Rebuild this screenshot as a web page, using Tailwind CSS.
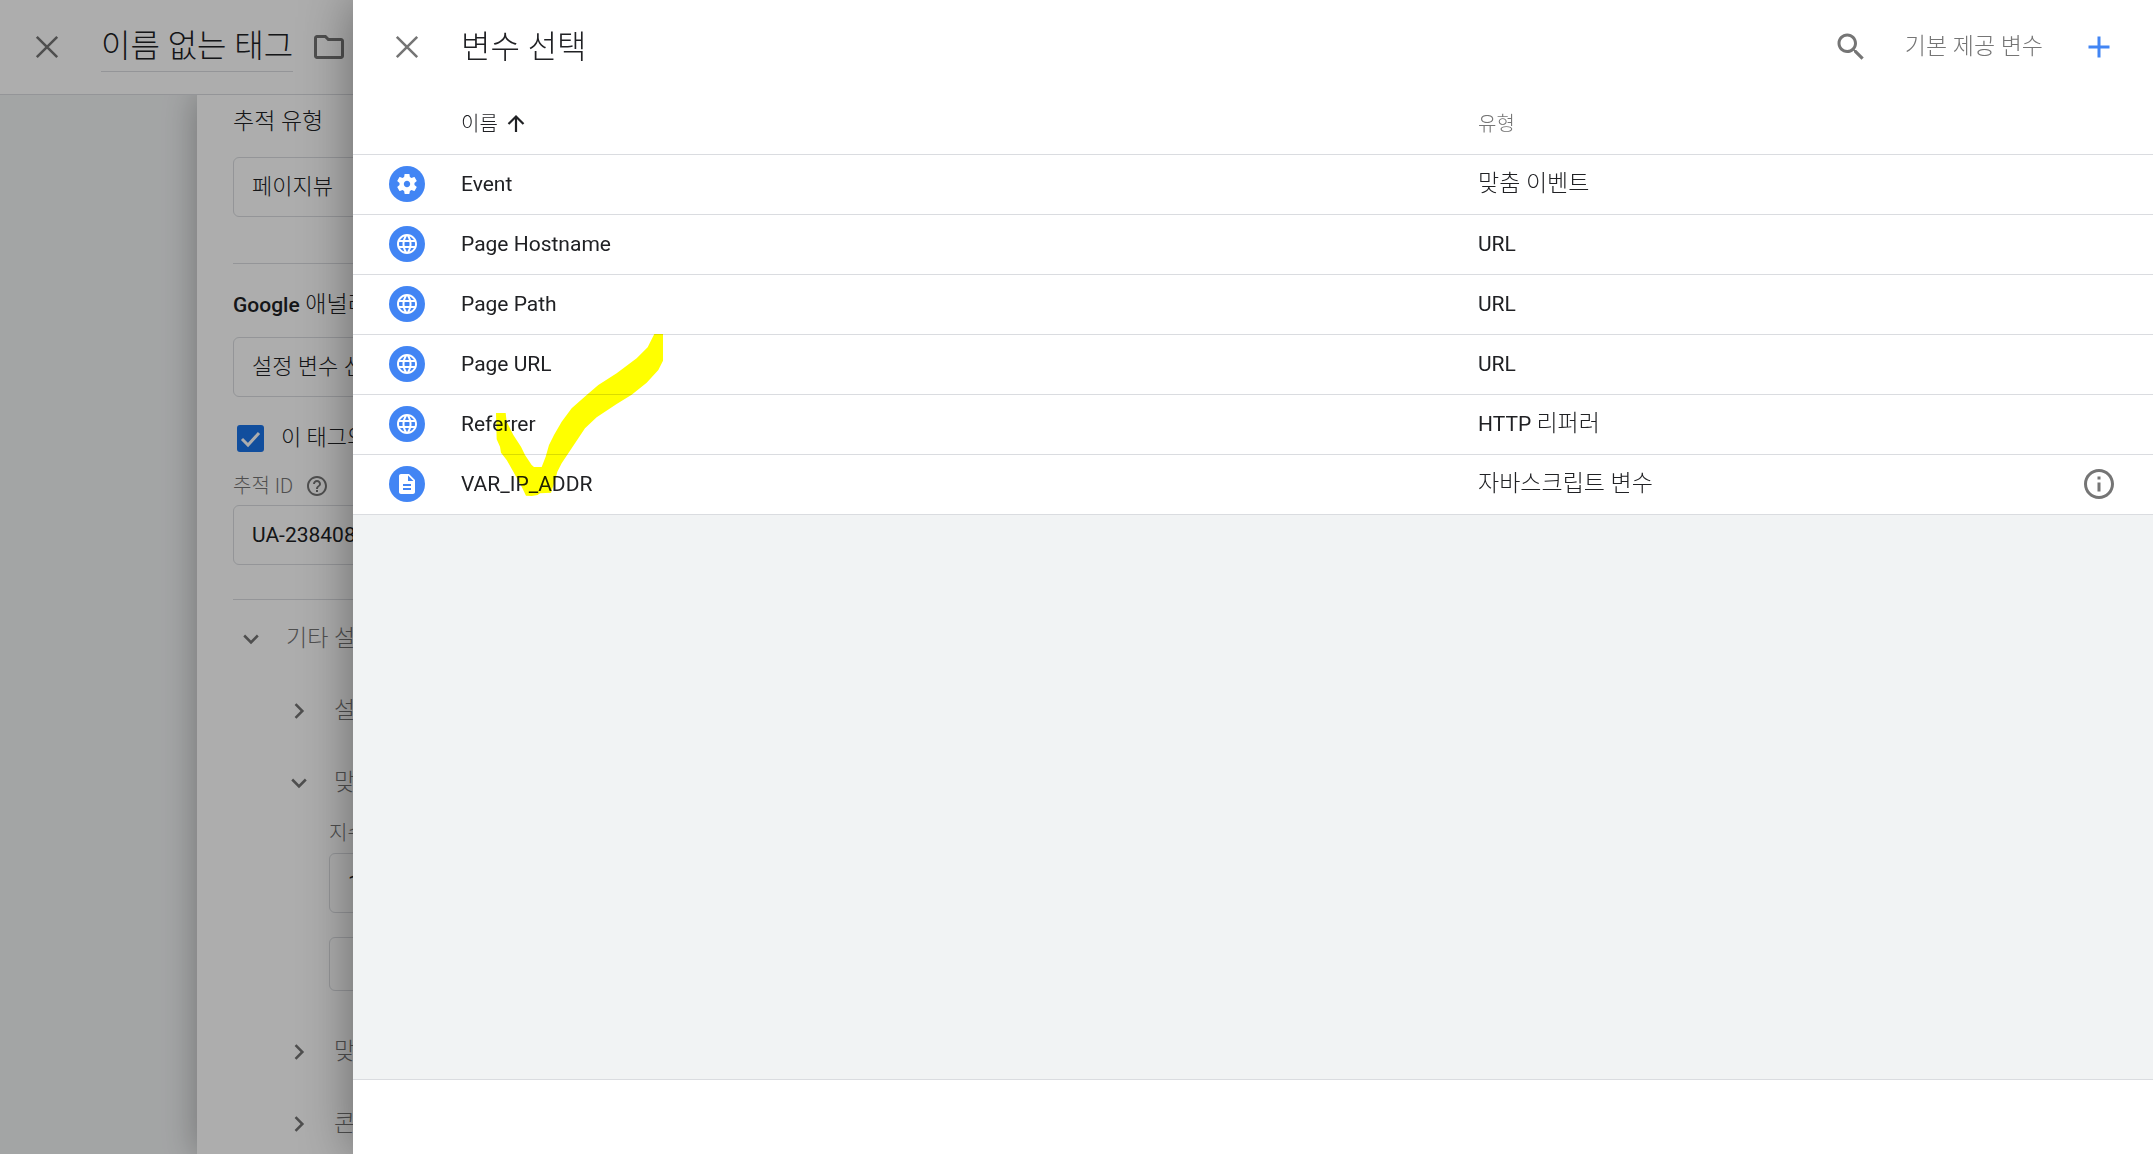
<!DOCTYPE html>
<html lang="ko">
  <head>
    <meta charset="UTF-8" />
    <meta name="viewport" content="width=device-width, initial-scale=1.0" />
    <script src="https://cdn.jsdelivr.net/npm/@tailwindcss/browser@4"></script>
    <title>변수 선택</title>
  </head>
  <body
    class="relative h-screen overflow-hidden bg-white font-[Roboto,'Noto_Sans_CJK_KR',sans-serif] text-[21px] leading-[30px] text-[#202124]"
  >
    <!-- icons -->
    <svg class="hidden">
      <symbol id="icon-close" viewBox="0 0 24 24">
        <path d="M5.2 5.2l13.600 13.600M18.800 5.200l-13.600 13.600" fill="none" stroke="currentColor" stroke-width="1.700" />
      </symbol>
      <symbol id="icon-down" viewBox="-2 -2 28 28">
        <path d="M7.41 8.59L12 13.17l4.59-4.58L18 10l-6 6-6-6z" fill="currentColor" />
      </symbol>
      <symbol id="icon-right" viewBox="-2 -2 28 28">
        <path d="M8.59 16.59L13.17 12 8.59 7.41 10 6l6 6-6 6z" fill="currentColor" />
      </symbol>
      <symbol id="icon-globe" viewBox="0 0 24 24">
        <path
          fill="currentColor"
          d="M11.99 2C6.47 2 2 6.48 2 12s4.47 10 9.99 10C17.52 22 22 17.52 22 12S17.52 2 11.99 2zm6.93 6h-2.95c-.32-1.25-.78-2.45-1.38-3.56 1.84.63 3.37 1.91 4.33 3.56zM12 4.04c.83 1.2 1.48 2.53 1.91 3.96h-3.82c.43-1.43 1.08-2.76 1.91-3.96zM4.26 14C4.1 13.36 4 12.69 4 12s.1-1.36.26-2h3.38c-.08.66-.14 1.32-.14 2s.06 1.34.14 2H4.26zm.82 2h2.95c.32 1.25.78 2.45 1.38 3.56-1.84-.63-3.37-1.9-4.33-3.56zm2.95-8H5.08c.96-1.66 2.49-2.93 4.33-3.56C8.81 5.55 8.35 6.75 8.03 8zM12 19.96c-.83-1.2-1.48-2.53-1.91-3.96h3.82c-.43 1.43-1.08 2.76-1.91 3.96zM14.34 14H9.66c-.09-.66-.16-1.32-.16-2s.07-1.35.16-2h4.68c.09.65.16 1.32.16 2s-.07 1.34-.16 2zm.25 5.56c.6-1.11 1.06-2.31 1.38-3.56h2.95c-.96 1.65-2.49 2.93-4.33 3.56zM16.36 14c.08-.66.14-1.32.14-2s-.06-1.34-.14-2h3.38c.16.64.26 1.31.26 2s-.1 1.36-.26 2h-3.38z"
        />
      </symbol>
    </svg>

    <!-- tag editor -->
    <div class="flex h-full flex-col">
      <header
        class="relative z-10 flex h-[95px] shrink-0 items-center border-b border-[#dadce0] bg-white pl-[29px]"
      >
        <button type="button" aria-label="닫기" class="text-[#757575]">
          <svg class="size-9"><use href="#icon-close" /></svg>
        </button>
        <h1
          class="ml-9 border-b border-[#dadce0] pb-px text-[32px] leading-[48px] font-light whitespace-nowrap"
        >
          이름 없는 태그
        </h1>
        <button type="button" aria-label="폴더" class="ml-[18px] text-[#757575]">
          <svg class="size-9" viewBox="0 0 24 24">
            <path
              fill="currentColor"
              d="M9.17 6l2 2H20v10H4V6h5.17M10 4H4c-1.1 0-1.99.9-1.99 2L2 18c0 1.1.9 2 2 2h16c1.1 0 2-.9 2-2V8c0-1.1-.9-2-2-2h-8l-2-2z"
            />
          </svg>
        </button>
      </header>

      <div class="flex min-h-0 grow bg-[#f1f3f4] pl-[197px]">
        <form class="grow bg-white px-9 pt-3 shadow-[0_0_32px_rgba(0,0,0,0.3)]">
          <label for="track-type" class="block text-[23px] font-light">추적 유형</label>
          <select
            id="track-type"
            class="mt-5 block h-15 w-full appearance-none rounded-md border border-[#dadce0] px-[18px] text-[22px] font-light"
          >
            <option>페이지뷰</option>
          </select>

          <hr class="mt-[46px] border-[#dadce0]" />

          <label for="ga-setting" class="mt-[26px] block text-[23px] font-light"
            ><b class="text-[21px] font-medium">Google</b> 애널리틱스 설정</label
          >
          <select
            id="ga-setting"
            class="mt-[17px] block h-15 w-full appearance-none rounded-md border border-[#dadce0] px-[18px] text-[22px] font-light"
          >
            <option>설정 변수 선택...</option>
          </select>

          <div class="mt-[26px] flex items-center gap-[17px] pl-1">
            <span class="grid size-[27px]">
              <input
                id="override"
                type="checkbox"
                checked
                class="col-start-1 row-start-1 size-[27px] appearance-none rounded-[3px] bg-[#1a73e8]"
              />
              <svg class="pointer-events-none col-start-1 row-start-1 size-[27px]" viewBox="0 0 27 27">
                <path d="M5 14l6 6L22 8" fill="none" stroke="#fff" stroke-width="3" />
              </svg>
            </span>
            <label for="override" class="text-[22px] font-light">이 태그의 재정의 설정 사용</label>
          </div>

          <div class="mt-[18px] flex items-center gap-3 text-[#757575]">
            <label for="track-id" class="text-[20px] font-light">추적 ID</label>
            <svg class="size-6" viewBox="0 0 24 24">
              <path
                fill="currentColor"
                d="M11 18h2v-2h-2v2zm1-16C6.48 2 2 6.48 2 12s4.48 10 10 10 10-4.480 10-10S17.520 2 12 2zm0 18c-4.410 0-8-3.590-8-8s3.590-8 8-8 8 3.590 8 8-3.590 8-8 8zm0-14c-2.210 0-4 1.790-4 4h2c0-1.100.9-2 2-2s2 .9 2 2c0 2-3 1.750-3 5h2c0-2.250 3-2.500 3-5 0-2.210-1.790-4-4-4z"
              />
            </svg>
          </div>
          <input
            id="track-id"
            type="text"
            value="UA-238408"
            class="mt-1 block h-15 w-full rounded-md border border-[#dadce0] px-[18px]"
          />

          <hr class="mt-[34px] border-[#dadce0]" />

          <div class="text-[23px] text-[#757575]">
            <button type="button" class="mt-[21px] flex items-center gap-[17px] font-light">
              <svg class="size-9"><use href="#icon-down" /></svg>기타 설정
            </button>
            <div class="flex flex-col items-start pl-[48px]">
              <button type="button" class="mt-9 flex items-center gap-[17px] font-light">
                <svg class="size-9"><use href="#icon-right" /></svg>설정할 입력란
              </button>
              <button type="button" class="mt-9 flex items-center gap-[17px] font-light">
                <svg class="size-9"><use href="#icon-down" /></svg>맞춤 측정기준
              </button>
              <div class="mt-[17px] flex w-full flex-col pl-12">
                <label for="dim-index" class="text-[20px] font-light">지수</label>
                <input
                  id="dim-index"
                  type="text"
                  value="1"
                  class="mt-[5px] h-15 rounded-md border border-[#dadce0] px-[18px] text-[21px] text-[#202124]"
                />
                <button
                  type="button"
                  class="mt-6 h-[54px] rounded-md border border-[#dadce0]"
                  aria-label="맞춤 측정기준 추가"
                ></button>
              </div>
              <button type="button" class="mt-[43px] flex items-center gap-[17px] font-light">
                <svg class="size-9"><use href="#icon-right" /></svg>맞춤 측정항목
              </button>
              <button type="button" class="mt-9 flex items-center gap-[17px] font-light">
                <svg class="size-9"><use href="#icon-right" /></svg>콘텐츠 그룹
              </button>
            </div>
          </div>
        </form>
      </div>
    </div>

    <!-- scrim -->
    <div class="absolute inset-0 z-10 bg-black/32"></div>

    <!-- variable picker -->
    <section
      class="absolute inset-y-0 right-0 left-[353px] z-20 flex flex-col bg-[#f1f3f4] shadow-[0_0_48px_rgba(0,0,0,0.4)]"
    >
      <header class="flex h-[94px] shrink-0 items-center bg-white px-9">
        <button type="button" aria-label="닫기" class="text-[#757575]">
          <svg class="size-9"><use href="#icon-close" /></svg>
        </button>
        <h2 class="ml-9 text-[32px] leading-[46px] font-light">변수 선택</h2>
        <button type="button" aria-label="검색" class="ml-auto text-[#757575]">
          <svg class="size-9" viewBox="0 0 24 24">
            <path
              fill="currentColor"
              d="M15.5 14h-.79l-.28-.27C15.41 12.59 16 11.11 16 9.5 16 5.91 13.090 3 9.500 3S3 5.910 3 9.500 5.910 16 9.500 16c1.610 0 3.090-.59 4.230-1.570l.27.28v.79l5 4.990L20.490 19l-4.990-5zm-6 0C7.010 14 5 11.990 5 9.500S7.010 5 9.500 5 14 7.010 14 9.500 11.990 14 9.500 14z"
            />
          </svg>
        </button>
        <button type="button" class="ml-9 text-[23px] font-light text-[#757575]">기본 제공 변수</button>
        <button type="button" aria-label="새 변수" class="ml-[38px] text-[#4285f4]">
          <svg class="size-9" viewBox="0 0 24 24">
            <path d="M12 5v14M5 12h14" fill="none" stroke="currentColor" stroke-width="2" />
          </svg>
        </button>
      </header>

      <table class="w-full table-fixed border-collapse bg-white text-left">
        <colgroup>
          <col class="w-[108px]" />
          <col class="w-[56.5%]" />
          <col />
          <col class="w-[90px]" />
        </colgroup>
        <thead>
          <tr class="h-15 border-b border-[#dadce0] text-[20px]">
            <th></th>
            <th class="font-light">
              <button type="button" class="flex items-center gap-[6px]">
                이름
                <svg class="size-6" viewBox="0 0 24 24">
                  <path d="M12 20V5M4.500 12L12 4.500l7.500 7.500" fill="none" stroke="currentColor" stroke-width="2.200" />
                </svg>
              </button>
            </th>
            <th class="font-light text-[#757575]">유형</th>
            <th></th>
          </tr>
        </thead>
        <tbody>
          <tr class="h-15 border-b border-[#dadce0]">
            <td class="pl-9">
              <span class="flex size-9 items-center justify-center rounded-full bg-[#4285f4] text-white">
                <svg class="size-6" viewBox="0 0 24 24">
                  <path
                    fill="currentColor"
                    d="M19.430 12.980c.04-.32.07-.64.07-.98s-.03-.66-.07-.98l2.110-1.650c.19-.15.24-.42.12-.64l-2-3.460c-.12-.22-.39-.3-.61-.22l-2.490 1c-.52-.4-1.080-.73-1.690-.98l-.38-2.650C14.460 2.180 14.250 2 14 2h-4c-.25 0-.46.18-.49.42l-.38 2.650c-.61.25-1.170.59-1.690.98l-2.490-1c-.23-.09-.49 0-.61.22l-2 3.460c-.13.22-.07.49.12.64l2.110 1.650c-.04.32-.07.65-.07.98s.03.66.07.98l-2.110 1.650c-.19.15-.24.42-.12.64l2 3.460c.12.22.39.3.61.22l2.490-1c.52.4 1.080.73 1.690.98l.38 2.650c.03.24.24.42.49.42h4c.25 0 .46-.18.49-.42l.38-2.650c.61-.25 1.170-.59 1.690-.98l2.490 1c.23.09.49 0 .61-.22l2-3.460c.12-.22.07-.49-.12-.64l-2.110-1.650zM12 15.200c-1.770 0-3.200-1.430-3.200-3.200s1.430-3.200 3.200-3.200 3.200 1.430 3.200 3.200-1.430 3.200-3.200 3.200z"
                  />
                </svg>
              </span>
            </td>
            <td>Event</td>
            <td class="text-[23px] font-light">맞춤 이벤트</td>
            <td></td>
          </tr>
          <tr class="h-15 border-b border-[#dadce0]">
            <td class="pl-9">
              <span class="flex size-9 items-center justify-center rounded-full bg-[#4285f4] text-white">
                <svg class="size-6"><use href="#icon-globe" /></svg>
              </span>
            </td>
            <td>Page Hostname</td>
            <td>URL</td>
            <td></td>
          </tr>
          <tr class="h-15 border-b border-[#dadce0]">
            <td class="pl-9">
              <span class="flex size-9 items-center justify-center rounded-full bg-[#4285f4] text-white">
                <svg class="size-6"><use href="#icon-globe" /></svg>
              </span>
            </td>
            <td>Page Path</td>
            <td>URL</td>
            <td></td>
          </tr>
          <tr class="h-15 border-b border-[#dadce0]">
            <td class="pl-9">
              <span class="flex size-9 items-center justify-center rounded-full bg-[#4285f4] text-white">
                <svg class="size-6"><use href="#icon-globe" /></svg>
              </span>
            </td>
            <td>Page URL</td>
            <td>URL</td>
            <td></td>
          </tr>
          <tr class="h-15 border-b border-[#dadce0]">
            <td class="pl-9">
              <span class="flex size-9 items-center justify-center rounded-full bg-[#4285f4] text-white">
                <svg class="size-6"><use href="#icon-globe" /></svg>
              </span>
            </td>
            <td>Referrer</td>
            <td>HTTP <span class="text-[23px] font-light">리퍼러</span></td>
            <td></td>
          </tr>
          <tr class="h-15 border-b border-[#dadce0]">
            <td class="pl-9">
              <span class="flex size-9 items-center justify-center rounded-full bg-[#4285f4] text-white">
                <svg class="size-6" viewBox="0 0 24 24">
                  <path
                    fill="currentColor"
                    d="M14 2H6c-1.100 0-1.990.9-1.990 2L4 20c0 1.100.89 2 1.990 2H18c1.100 0 2-.9 2-2V8l-6-6zm2 16H8v-2h8v2zm0-4H8v-2h8v2zm-3-5V3.500L18.500 9H13z"
                  />
                </svg>
              </span>
            </td>
            <td>VAR_IP_ADDR</td>
            <td class="text-[23px] font-light">자바스크립트 변수</td>
            <td>
              <button type="button" aria-label="변수 정보" class="ml-[18px] block text-[#757575]">
                <svg class="size-9" viewBox="0 0 24 24">
                  <path
                    fill="currentColor"
                    d="M11 7h2v2h-2zm0 4h2v6h-2zm1-9C6.480 2 2 6.480 2 12s4.480 10 10 10 10-4.480 10-10S17.520 2 12 2zm0 18c-4.410 0-8-3.590-8-8s3.590-8 8-8 8 3.590 8 8-3.590 8-8 8z"
                  />
                </svg>
              </button>
            </td>
          </tr>
        </tbody>
      </table>

      <footer class="mt-auto h-[75px] shrink-0 border-t border-[#dadce0] bg-white"></footer>

      <!-- highlighter check mark -->
      <svg
        class="pointer-events-none absolute top-[334px] left-[143px] h-[162px] w-[167px] mix-blend-multiply"
        viewBox="438 192 501 486"
      >
        <path
          fill="#ff0"
          d="M438 429H467L470 455 480 475 490 495 513 530 525 555 545 585 552 591H575L587 560 597 525 612 495 635 455 665 415 710 375 745 345 800 310 860 265 893 232 905 208 913 192H939V272L925 300 890 338 845 374 800 402 740 442 705 475 685 505 655 550 635 580 622 605 614 635 603 668 570 670 563 675 545 678 528 677 515 650 490 605 470 570 453 548 450 530 440 508Z"
        />
      </svg>
    </section>
  </body>
</html>
